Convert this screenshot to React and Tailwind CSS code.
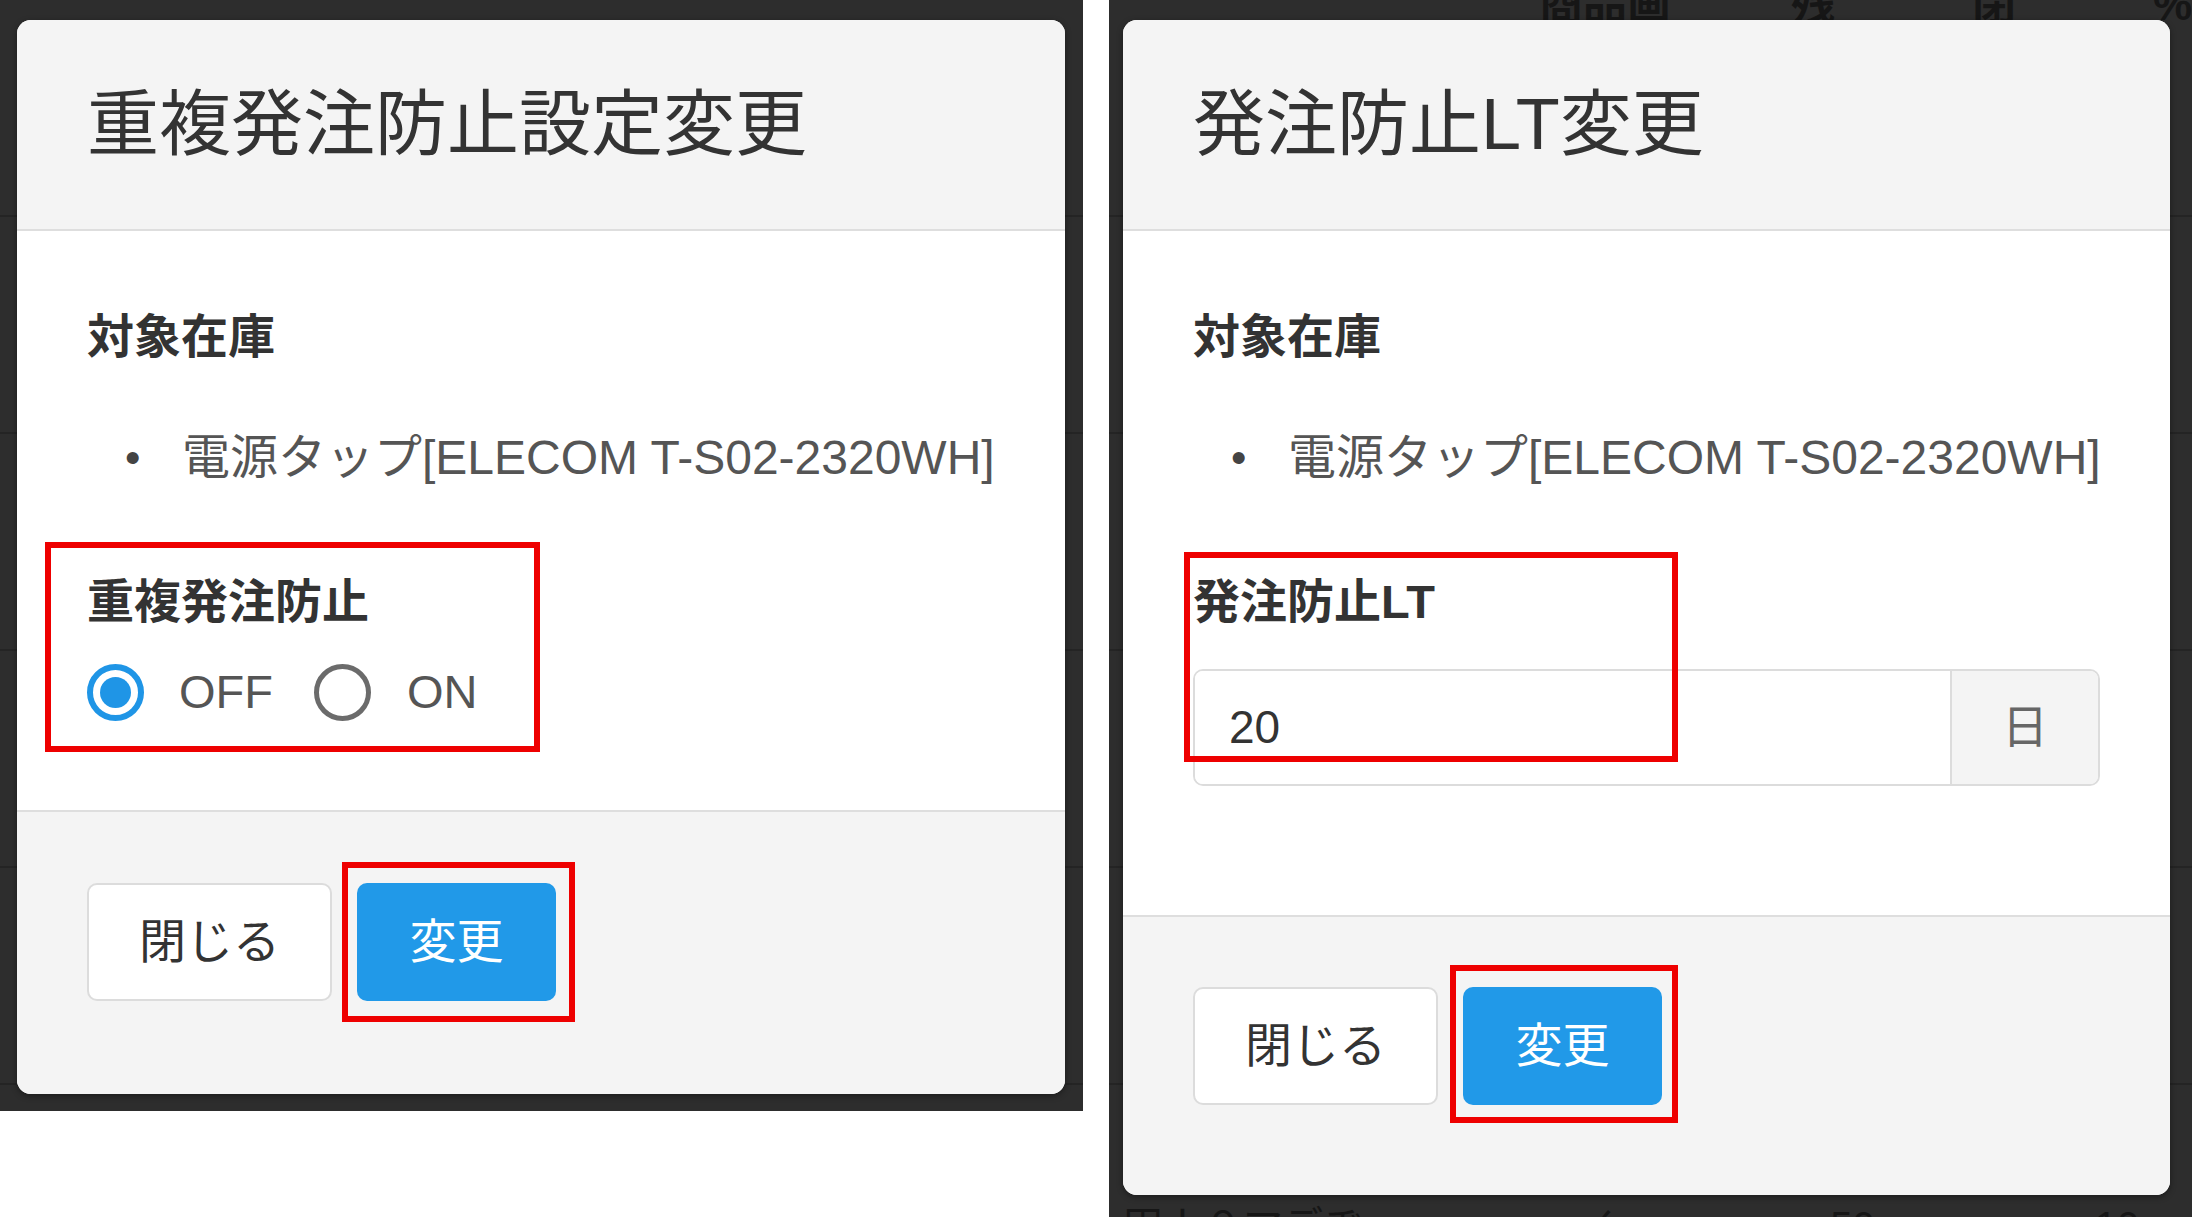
import React from 'react';

const font = { fontFamily: '"Liberation Sans", "Noto Sans CJK JP", "Noto Sans", sans-serif' };

// 背景のテーブル(モーダルの後ろ)
const BackdropRows = ({ top }) => (
  <div className="absolute inset-0 flex flex-col" style={{ paddingTop: top }}>
    {[0, 1, 2, 3, 4, 5].map((i) => (
      <div key={i} className="h-[217px] border-b-2 border-[#242424] shrink-0" />
    ))}
  </div>
);

const Modal = ({ title, width, height, bodyHeight, footerTop, children, footerMark, bodyMark }) => (
  <div
    className="relative bg-white rounded-[14px] overflow-hidden flex flex-col shrink-0 shadow-[0_2px_6px_rgba(0,0,0,0.4)]"
    style={{ width, height }}
  >
    <div className="h-[211px] shrink-0 bg-[#f4f4f4] border-b-2 border-[#dedede] flex items-center px-[70px] pb-[2px]">
      <h1 className="text-[72px] leading-none text-[#333] font-normal whitespace-nowrap">{title}</h1>
    </div>
    <div className="shrink-0 pl-[70px] pr-[40px]" style={{ height: bodyHeight }}>
      <div className="pt-[76px] text-[47px] leading-[60px] font-bold text-[#333]">対象在庫</div>
      <ul className="mt-[61px]">
        <li className="flex items-center h-[60px] text-[48px] text-[#555] whitespace-nowrap">
          <span className="w-[95px] shrink-0 pl-[38px] text-[44px] text-[#444]">•</span>
          <span className="whitespace-nowrap">電源タップ[ELECOM T-S02-2320WH]</span>
        </li>
      </ul>
      {children}
    </div>
    <div className="flex-1 bg-[#f4f4f4] border-t-2 border-[#dedede] px-[70px]" style={{ paddingTop: footerTop }}>
      <div className="flex gap-[25px]">
        <button className="w-[245px] h-[118px] bg-white border-2 border-[#dcdcdc] rounded-[10px] text-[47px] text-[#333]">
          閉じる
        </button>
        <button className="w-[199px] h-[118px] bg-[#2199e8] rounded-[10px] text-[47px] text-white">
          変更
        </button>
      </div>
    </div>
    {bodyMark}
    {footerMark}
  </div>
);

const RedBox = ({ left, top, w, h }) => (
  <div
    className="absolute border-[6px] border-[#ee0000] pointer-events-none"
    style={{ left, top, width: w, height: h }}
  />
);

const Radio = ({ checked }) =>
  checked ? (
    <span className="w-[57px] h-[57px] rounded-full border-[6px] border-[#1f95e6] flex items-center justify-center shrink-0">
      <span className="w-[31px] h-[31px] rounded-full bg-[#1f95e6]" />
    </span>
  ) : (
    <span className="w-[57px] h-[57px] rounded-full border-[5px] border-[#6b6b6b] shrink-0" />
  );

export default function App() {
  return (
    <div className="w-[2192px] h-[1217px] bg-white flex items-start overflow-hidden" style={font}>
      {/* 左: 重複発注防止設定変更 */}
      <div className="relative w-[1083px] h-[1111px] bg-[#2d2d2d] pt-[20px] pl-[17px] shrink-0">
        <BackdropRows top={0} />
        <Modal
          title="重複発注防止設定変更"
          width={1048}
          height={1074}
          bodyHeight={579}
          footerTop={71}
          bodyMark={<RedBox left={28} top={522} w={495} h={210} />}
          footerMark={<RedBox left={325} top={842} w={233} h={160} />}
        >
          <div className="mt-[84px] text-[47px] leading-[60px] font-bold text-[#333]">重複発注防止</div>
          <div className="mt-[30px] h-[60px] flex items-center text-[47px] text-[#555]">
            <Radio checked />
            <span className="ml-[35px]">OFF</span>
            <span className="ml-[41px] flex"><Radio /></span>
            <span className="ml-[36px]">ON</span>
          </div>
        </Modal>
      </div>

      <div className="w-[26px] shrink-0" />

      {/* 右: 発注防止LT変更 */}
      <div className="relative w-[1083px] h-[1217px] bg-[#2d2d2d] pt-[20px] pl-[14px] shrink-0">
        <BackdropRows top={0} />
        <div className="absolute top-[-28px] left-[430px] flex gap-[110px] text-[44px] font-bold text-[#161616]">
          <span>商品画像</span>
          <span>残量</span>
          <span>閉細</span>
          <span>%</span>
        </div>
        <div className="absolute top-[1196px] left-[14px] flex gap-[220px] text-[40px] text-[#161616]">
          <span>田ｌ０マデヂ</span>
          <span>✓</span>
          <span>50</span>
          <span>10</span>
        </div>
        <Modal
          title="発注防止LT変更"
          width={1047}
          height={1175}
          bodyHeight={684}
          footerTop={70}
          bodyMark={<RedBox left={61} top={532} w={494} h={210} />}
          footerMark={<RedBox left={327} top={945} w={228} h={158} />}
        >
          <div className="mt-[84px] text-[47px] leading-[60px] font-bold text-[#333]">発注防止LT</div>
          <div className="mt-[37px] mr-[30px] h-[117px] flex border-2 border-[#dcdcdc] rounded-[10px] overflow-hidden">
            <input
              readOnly
              value="20"
              className="flex-1 min-w-0 px-[34px] text-[46px] text-[#333] bg-white outline-none"
              style={font}
            />
            <span className="w-[148px] border-l-2 border-[#dcdcdc] bg-[#f4f4f4] flex items-center justify-center text-[46px] text-[#666]">
              日
            </span>
          </div>
        </Modal>
      </div>
    </div>
  );
}
